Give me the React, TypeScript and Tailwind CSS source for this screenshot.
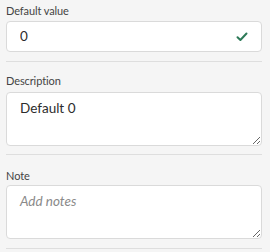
import { useState } from "react";

const font = { fontFamily: "Lato, 'Open Sans', sans-serif" };

export default function App() {
  const [value, setValue] = useState("0");
  const [description, setDescription] = useState("Default 0");
  const [note, setNote] = useState("");

  return (
    <div
      className="h-[252px] w-[270px] overflow-hidden bg-[#f5f5f5] pl-[6px] pr-[8px] text-[#2c2c2c]"
      style={font}
    >
      {/* Default value */}
      <div className="border-b border-[#dedede] pt-[3px] pb-[9px]">
        <label className="mb-[2px] block text-[11px] leading-[16px] tracking-[-0.1px] text-[#444]">
          Default value
        </label>
        <div className="flex h-[31px] items-center rounded-[4px] border border-[#dadada] bg-white pl-[13px] pr-[13px]">
          <input
            value={value}
            onChange={(e) => setValue(e.target.value)}
            className="min-w-0 flex-1 bg-transparent text-[13.5px] text-[#2c2c2c] outline-none"
            style={font}
          />
          <svg width="12" height="10" viewBox="0 0 12 10" className="shrink-0">
            <path
              d="M1.5 5.2 L4.4 8 L10.5 1.5"
              fill="none"
              stroke="#2d7a58"
              strokeWidth="2"
              strokeLinecap="round"
              strokeLinejoin="round"
            />
          </svg>
        </div>
      </div>

      {/* Description */}
      <div className="border-b border-[#dedede] pt-[11px] pb-[8px]">
        <label className="mb-[3px] block text-[11px] leading-[16px] tracking-[-0.1px] text-[#444]">
          Description
        </label>
        <textarea
          value={description}
          onChange={(e) => setDescription(e.target.value)}
          className="block h-[54px] w-full resize-y rounded-[4px] border border-[#dadada] bg-white px-[13px] py-[5px] text-[13.5px] leading-[20px] text-[#2c2c2c] outline-none"
          style={font}
        />
      </div>

      {/* Note */}
      <div className="border-b border-[#dedede] pt-[13px] pb-[9px]">
        <label className="mb-[1px] block text-[11px] leading-[16px] tracking-[-0.1px] text-[#444]">
          Note
        </label>
        <textarea
          value={note}
          onChange={(e) => setNote(e.target.value)}
          placeholder="Add notes"
          className="block h-[54px] w-full resize-y rounded-[4px] border border-[#dadada] bg-white px-[13px] py-[5px] text-[13.5px] leading-[20px] text-[#2c2c2c] outline-none placeholder:italic placeholder:text-[#8a8a8a]"
          style={font}
        />
      </div>
    </div>
  );
}
